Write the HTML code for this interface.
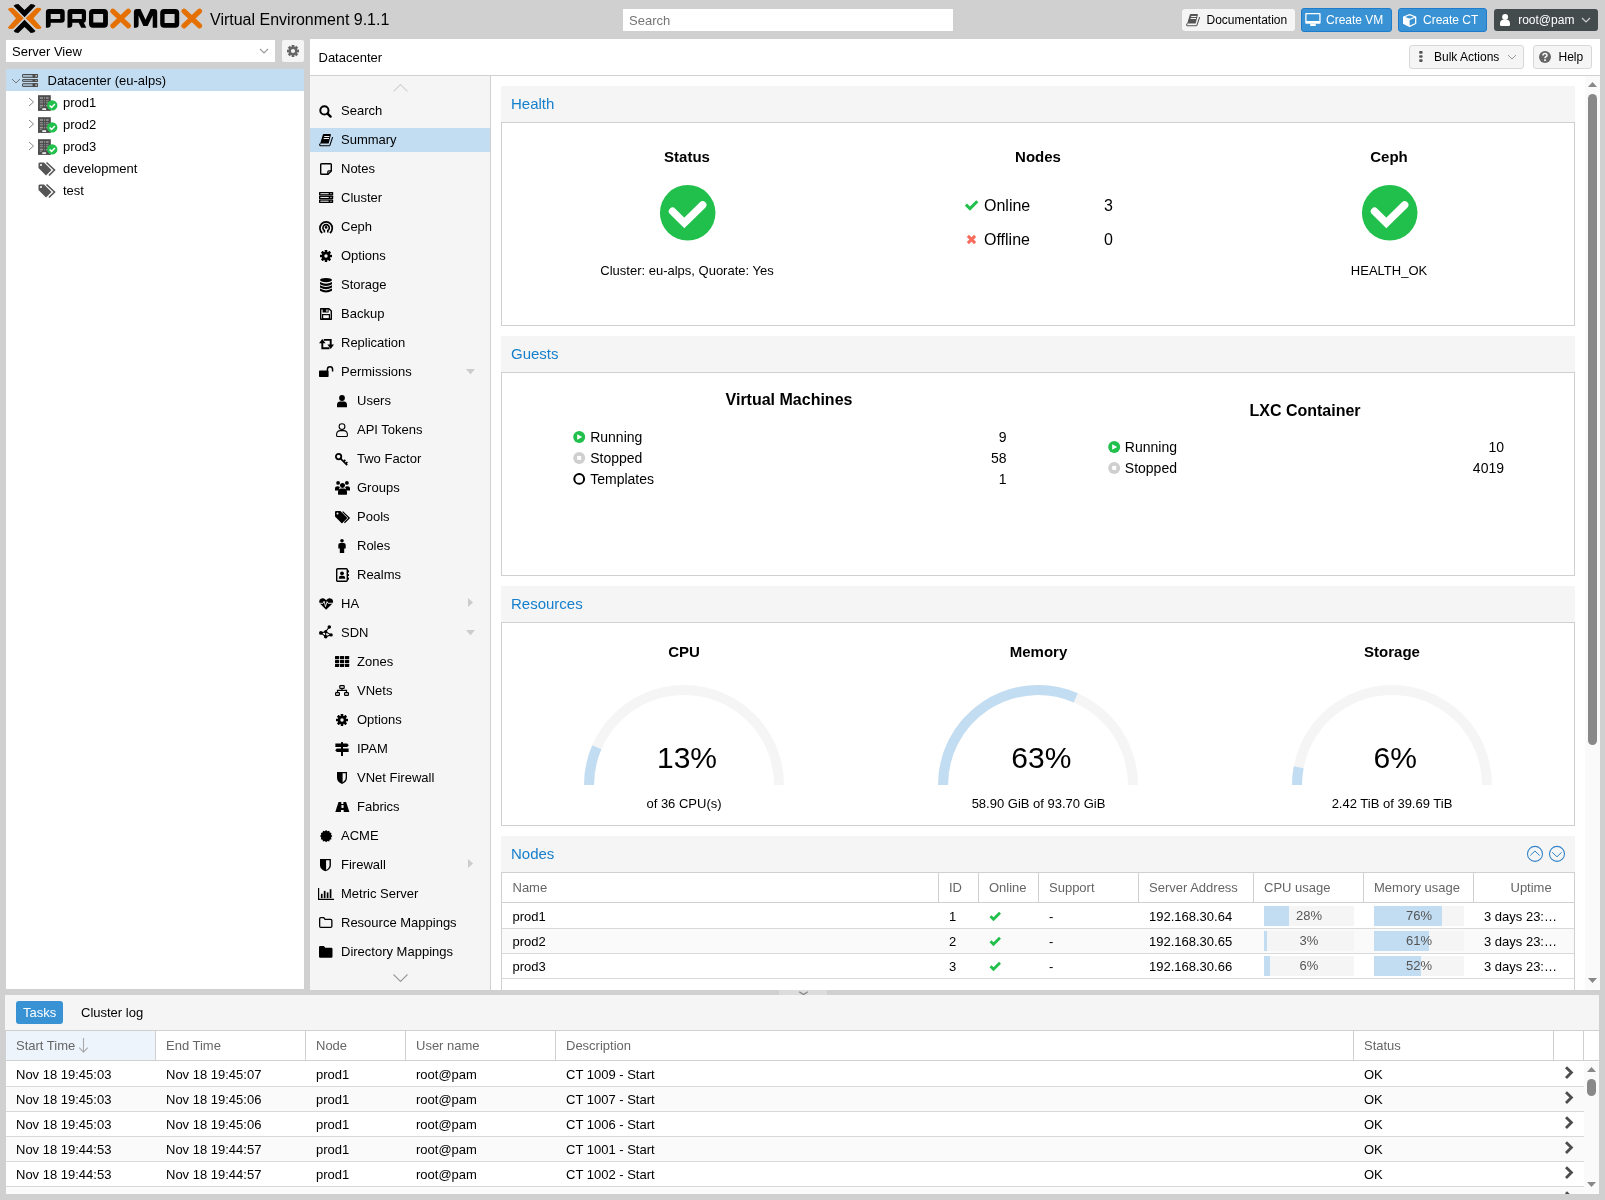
<!DOCTYPE html>
<html><head><meta charset="utf-8"><style>
html,body{margin:0;padding:0;}
body{width:1605px;height:1200px;overflow:hidden;background:#d0d0d0;position:relative;font-family:"Liberation Sans", sans-serif;}
.t{position:absolute;white-space:nowrap;}
#w{position:absolute;left:0;top:0;width:1605px;height:1200px;will-change:transform;}
.r{position:absolute;}
svg.r{overflow:visible;}
</style></head><body><div id="w">
<svg class="r" style="left:0px;top:0px" width="210" height="39" viewBox="0 0 210 39"><path d="M13.6,5.8 Q14.8,3.9 18.3,3.9 L24.55,9.9 L30.8,3.9 Q34.3,3.9 35.5,5.8 L24.55,17.2 Z" fill="#000"/><path d="M13.6,31.1 Q14.8,33 18.3,33 L24.55,27 L30.8,33 Q34.3,33 35.5,31.1 L24.55,19.7 Z" fill="#000"/><path d="M7.9,9.3 Q8.5,7.8 11,7.8 Q13,7.8 14,8.8 L23.7,18.3 L14,27.9 Q13,28.9 11,28.9 Q8.5,28.9 7.9,27.4 L16,18.3 Z" fill="#e57000"/><path d="M41.5,9.3 Q40.9,7.8 38.4,7.8 Q36.4,7.8 35.4,8.8 L25.7,18.3 L35.4,27.9 Q36.4,28.9 38.4,28.9 Q40.9,28.9 41.5,27.4 L33.4,18.3 Z" fill="#e57000"/><path fill-rule="evenodd" fill="#000" d="M45.9,27.8 V12 Q45.9,9 48.9,9 H61.5 Q64.7,9 64.7,12.2 V19.6 Q64.7,22.8 61.5,22.8 H50.7 V24.5 Q50.7,27.8 47.4,27.8 Z M50.7,14.1 V19.1 H60.2 V14.1 Z"/><path fill-rule="evenodd" fill="#000" d="M67.5,27.8 V12 Q67.5,9 70.5,9 H82.8 Q86,9 86,12.2 V19.6 Q86,22.3 83.8,22.8 L86.3,27.8 H81.3 L78.6,22.8 H72.3 V24.5 Q72.3,27.8 69,27.8 Z M72.3,14.1 V19.1 H81.8 V14.1 Z"/><path fill-rule="evenodd" fill="#000" d="M89,13 Q89,9 93,9 H103.9 Q107.9,9 107.9,13 V23.8 Q107.9,27.8 103.9,27.8 H93 Q89,27.8 89,23.8 Z M93.3,14.1 V22.5 H103.1 V14.1 Z"/><path d="M112.8,11.2 L128.4,25.8 M128.4,11.2 L112.8,25.8" stroke="#e57000" stroke-width="5.2" stroke-linecap="round"/><path fill="#000" d="M133.9,27.8 V12 Q133.9,9 136.9,9 H140.5 L145.5,19.8 L150.5,9 H154.2 Q157.2,9 157.2,12 V27.8 H152.7 V15.5 L147.6,25.9 H143.4 L138.6,15.5 V24.5 Q138.6,27.8 135.6,27.8 Z"/><path fill-rule="evenodd" fill="#000" d="M160.2,13 Q160.2,9 164.2,9 H175.2 Q179.2,9 179.2,13 V23.8 Q179.2,27.8 175.2,27.8 H164.2 Q160.2,27.8 160.2,23.8 Z M164.6,14 V23 H174.6 V14 Z"/><path d="M184,11.2 L199.6,25.8 M199.6,11.2 L184,25.8" stroke="#e57000" stroke-width="5.2" stroke-linecap="round"/></svg>
<div class="t" style="left:210.00px;top:12.46px;font-size:16px;line-height:16px;font-weight:normal;color:#000;">Virtual Environment 9.1.1</div>
<div class="r" style="left:623px;top:9px;width:330px;height:22px;background:#fff"></div>
<div class="t" style="left:629.00px;top:14.00px;font-size:13px;line-height:13px;font-weight:normal;color:#757575;">Search</div>
<div class="r" style="left:1182px;top:9px;width:113px;height:22px;background:#f5f5f5;border-radius:3px"></div>
<svg class="r" style="left:1186px;top:14px" width="14" height="12" viewBox="0 0 14 12"><path d="M4.6,0 H11.3 Q12.1,0 11.9,0.8 L9.7,9.2 Q9.6,9.6 9.1,9.6 H1.2 L3.9,0.6 Q4.1,0 4.6,0 Z" fill="#555"/><path d="M1.4,9.4 Q0.1,10.4 0.9,11.5 Q1.1,11.8 1.6,11.8 H10.6 M13.6,3.2 L10.8,11.6" fill="none" stroke="#555" stroke-width="1.1"/><path d="M5.2,2.5 H10.4 M4.6,4.5 H10" stroke="#f5f5f5" stroke-width="1"/></svg>
<div class="t" style="left:1206.50px;top:13.84px;font-size:12px;line-height:12px;font-weight:normal;color:#000;">Documentation</div>
<div class="r" style="left:1301px;top:8px;width:91px;height:24px;background:#3892d4;border:1px solid #1e7ccb;box-sizing:border-box;border-radius:3px"></div>
<svg class="r" style="left:1305px;top:12px" width="16" height="14" viewBox="0 0 16 14"><path fill-rule="evenodd" fill="#fff" d="M0.25,2 Q0.25,1 1.25,1 H14.6 Q15.6,1 15.6,2 V10.75 Q15.6,11.75 14.6,11.75 H1.25 Q0.25,11.75 0.25,10.75 Z M1.55,2.3 V8.9 H14.3 V2.3 Z"/><path d="M5.4,11.7 H10.6 L10.9,14 H5.1 Z" fill="#fff"/></svg>
<div class="t" style="left:1326.00px;top:13.84px;font-size:12px;line-height:12px;font-weight:normal;color:#fff;">Create VM</div>
<div class="r" style="left:1398px;top:8px;width:89px;height:24px;background:#3892d4;border:1px solid #1e7ccb;box-sizing:border-box;border-radius:3px"></div>
<svg class="r" style="left:1403px;top:14px" width="14" height="14" viewBox="0 0 14 14"><path d="M6.65,0.7 L12.65,3 V9.5 L6.65,12.3 L0.65,9.5 V3 Z" fill="none" stroke="#fff" stroke-width="1.3" stroke-linejoin="round"/><path d="M0.65,3 L6.65,5.4 V12.3 L0.65,9.5 Z" fill="#fff"/><path d="M0.65,3 L6.65,5.4 L12.65,3" fill="none" stroke="#fff" stroke-width="1.3"/></svg>
<div class="t" style="left:1423.00px;top:13.84px;font-size:12px;line-height:12px;font-weight:normal;color:#fff;">Create CT</div>
<div class="r" style="left:1494px;top:9px;width:104px;height:22px;background:#444b4c;border-radius:3px"></div>
<svg class="r" style="left:1500px;top:13px" width="11" height="13" viewBox="0 0 11 13"><circle cx="5.1" cy="3.9" r="3.0" fill="#fff"/><path d="M0,11.8 V10.6 Q0,6.8 3.6,6.8 H6.4 Q10,6.8 10,10.6 V11.8 Q10,13 8.8,13 H1.2 Q0,13 0,11.8 Z" fill="#fff"/></svg>
<div class="t" style="left:1518.20px;top:13.84px;font-size:12px;line-height:12px;font-weight:normal;color:#fff;">root@pam</div>
<svg class="r" style="left:1581px;top:17px" width="10" height="7" viewBox="0 0 10 7"><polyline points="1,1 5,5 9,1" fill="none" stroke="#ccc" stroke-width="1.2"/></svg>
<div class="r" style="left:6px;top:40px;width:269px;height:22px;background:#fff"></div>
<div class="t" style="left:12.00px;top:44.70px;font-size:13px;line-height:13px;font-weight:normal;color:#000;">Server View</div>
<svg class="r" style="left:259px;top:47.5px" width="10" height="7" viewBox="0 0 10 7"><polyline points="1,1 5,5 9,1" fill="none" stroke="#999" stroke-width="1.1"/></svg>
<div class="r" style="left:282px;top:40px;width:22px;height:22px;background:#f5f5f5;border-radius:2px"></div>
<svg class="r" style="left:287px;top:45px" width="12" height="12" viewBox="0 0 12 12"><rect x="4.6" y="0" width="2.8" height="3" fill="#666" transform="rotate(0 6.0 6.0)"/><rect x="4.6" y="0" width="2.8" height="3" fill="#666" transform="rotate(45 6.0 6.0)"/><rect x="4.6" y="0" width="2.8" height="3" fill="#666" transform="rotate(90 6.0 6.0)"/><rect x="4.6" y="0" width="2.8" height="3" fill="#666" transform="rotate(135 6.0 6.0)"/><rect x="4.6" y="0" width="2.8" height="3" fill="#666" transform="rotate(180 6.0 6.0)"/><rect x="4.6" y="0" width="2.8" height="3" fill="#666" transform="rotate(225 6.0 6.0)"/><rect x="4.6" y="0" width="2.8" height="3" fill="#666" transform="rotate(270 6.0 6.0)"/><rect x="4.6" y="0" width="2.8" height="3" fill="#666" transform="rotate(315 6.0 6.0)"/><circle cx="6.0" cy="6.0" r="4.4" fill="#666"/><circle cx="6.0" cy="6.0" r="2.0999999999999996" fill="#f3f3f3"/></svg>
<div class="r" style="left:6px;top:69px;width:298px;height:920px;background:#fff"></div>
<div class="r" style="left:6px;top:69px;width:298px;height:22px;background:#c2ddf2"></div>
<svg class="r" style="left:10.5px;top:78px" width="10" height="8" viewBox="0 0 10 8"><polyline points="1,1 5,5 9,1" fill="none" stroke="#777" stroke-width="1.0"/></svg>
<svg class="r" style="left:22px;top:74px" width="17" height="14" viewBox="0 0 17 14"><rect x="0.5" y="0.5" width="15" height="2.8" rx="0.4" fill="#a9bfd0" stroke="#4a4a4a" stroke-width="1.0"/><rect x="10.5" y="0" width="5.5" height="3.8" rx="0.8" fill="#4a4a4a"/><rect x="13.6" y="1" width="1" height="1.7999999999999998" fill="#fff"/><rect x="0.5" y="5.6" width="15" height="1.8000000000000007" rx="0.4" fill="#a9bfd0" stroke="#4a4a4a" stroke-width="1.0"/><rect x="10.5" y="5.1" width="5.5" height="2.8000000000000007" rx="0.8" fill="#4a4a4a"/><rect x="13.6" y="6.1" width="1" height="0.8000000000000007" fill="#fff"/><rect x="0.5" y="9.7" width="15" height="2.700000000000001" rx="0.4" fill="#a9bfd0" stroke="#4a4a4a" stroke-width="1.0"/><rect x="10.5" y="9.2" width="5.5" height="3.700000000000001" rx="0.8" fill="#4a4a4a"/><rect x="13.6" y="10.2" width="1" height="1.700000000000001" fill="#fff"/></svg>
<div class="t" style="left:47.50px;top:74.00px;font-size:13px;line-height:13px;font-weight:normal;color:#000;">Datacenter (eu-alps)</div>
<svg class="r" style="left:28px;top:97px" width="7" height="10" viewBox="0 0 7 10"><polyline points="1,1 5.5,5 1,9" fill="none" stroke="#888" stroke-width="1.0"/></svg>
<svg class="r" style="left:37px;top:95px" width="20" height="17" viewBox="0 0 20 17"><rect x="1" y="0.2" width="12.8" height="15.7" fill="#4d4d4d"/><rect x="2.8" y="2.2" width="3.2" height="1.6" fill="#9a9a9a"/><rect x="7.1" y="2.2" width="1" height="1.6" fill="#9a9a9a"/><rect x="9.1" y="2.2" width="2.5" height="1.6" fill="#9a9a9a"/><rect x="2.8" y="5.3" width="3.2" height="1.0" fill="#9a9a9a"/><rect x="7.1" y="5.3" width="1" height="1.0" fill="#9a9a9a"/><rect x="9.1" y="5.3" width="2.5" height="1.0" fill="#9a9a9a"/><rect x="2.8" y="7.3" width="3.2" height="1.0" fill="#9a9a9a"/><rect x="7.1" y="7.3" width="1" height="1.0" fill="#9a9a9a"/><rect x="9.1" y="7.3" width="2.5" height="1.0" fill="#9a9a9a"/><rect x="2.8" y="9.8" width="3.2" height="1.6" fill="#9a9a9a"/><rect x="7.1" y="9.8" width="1" height="1.6" fill="#9a9a9a"/><rect x="9.1" y="9.8" width="2.5" height="1.6" fill="#9a9a9a"/><rect x="2.8" y="12.2" width="1.8" height="0.8" fill="#9a9a9a"/><rect x="5.3" y="13.3" width="3.8" height="1.6" fill="#fff"/><circle cx="15.2" cy="10.4" r="5.2" fill="#21bf4b"/><polyline points="12.6,10.5 14.6,12.4 17.9,9" fill="none" stroke="#fff" stroke-width="1.5"/></svg>
<div class="t" style="left:63.00px;top:96.00px;font-size:13px;line-height:13px;font-weight:normal;color:#000;">prod1</div>
<svg class="r" style="left:28px;top:119px" width="7" height="10" viewBox="0 0 7 10"><polyline points="1,1 5.5,5 1,9" fill="none" stroke="#888" stroke-width="1.0"/></svg>
<svg class="r" style="left:37px;top:117px" width="20" height="17" viewBox="0 0 20 17"><rect x="1" y="0.2" width="12.8" height="15.7" fill="#4d4d4d"/><rect x="2.8" y="2.2" width="3.2" height="1.6" fill="#9a9a9a"/><rect x="7.1" y="2.2" width="1" height="1.6" fill="#9a9a9a"/><rect x="9.1" y="2.2" width="2.5" height="1.6" fill="#9a9a9a"/><rect x="2.8" y="5.3" width="3.2" height="1.0" fill="#9a9a9a"/><rect x="7.1" y="5.3" width="1" height="1.0" fill="#9a9a9a"/><rect x="9.1" y="5.3" width="2.5" height="1.0" fill="#9a9a9a"/><rect x="2.8" y="7.3" width="3.2" height="1.0" fill="#9a9a9a"/><rect x="7.1" y="7.3" width="1" height="1.0" fill="#9a9a9a"/><rect x="9.1" y="7.3" width="2.5" height="1.0" fill="#9a9a9a"/><rect x="2.8" y="9.8" width="3.2" height="1.6" fill="#9a9a9a"/><rect x="7.1" y="9.8" width="1" height="1.6" fill="#9a9a9a"/><rect x="9.1" y="9.8" width="2.5" height="1.6" fill="#9a9a9a"/><rect x="2.8" y="12.2" width="1.8" height="0.8" fill="#9a9a9a"/><rect x="5.3" y="13.3" width="3.8" height="1.6" fill="#fff"/><circle cx="15.2" cy="10.4" r="5.2" fill="#21bf4b"/><polyline points="12.6,10.5 14.6,12.4 17.9,9" fill="none" stroke="#fff" stroke-width="1.5"/></svg>
<div class="t" style="left:63.00px;top:118.00px;font-size:13px;line-height:13px;font-weight:normal;color:#000;">prod2</div>
<svg class="r" style="left:28px;top:141px" width="7" height="10" viewBox="0 0 7 10"><polyline points="1,1 5.5,5 1,9" fill="none" stroke="#888" stroke-width="1.0"/></svg>
<svg class="r" style="left:37px;top:139px" width="20" height="17" viewBox="0 0 20 17"><rect x="1" y="0.2" width="12.8" height="15.7" fill="#4d4d4d"/><rect x="2.8" y="2.2" width="3.2" height="1.6" fill="#9a9a9a"/><rect x="7.1" y="2.2" width="1" height="1.6" fill="#9a9a9a"/><rect x="9.1" y="2.2" width="2.5" height="1.6" fill="#9a9a9a"/><rect x="2.8" y="5.3" width="3.2" height="1.0" fill="#9a9a9a"/><rect x="7.1" y="5.3" width="1" height="1.0" fill="#9a9a9a"/><rect x="9.1" y="5.3" width="2.5" height="1.0" fill="#9a9a9a"/><rect x="2.8" y="7.3" width="3.2" height="1.0" fill="#9a9a9a"/><rect x="7.1" y="7.3" width="1" height="1.0" fill="#9a9a9a"/><rect x="9.1" y="7.3" width="2.5" height="1.0" fill="#9a9a9a"/><rect x="2.8" y="9.8" width="3.2" height="1.6" fill="#9a9a9a"/><rect x="7.1" y="9.8" width="1" height="1.6" fill="#9a9a9a"/><rect x="9.1" y="9.8" width="2.5" height="1.6" fill="#9a9a9a"/><rect x="2.8" y="12.2" width="1.8" height="0.8" fill="#9a9a9a"/><rect x="5.3" y="13.3" width="3.8" height="1.6" fill="#fff"/><circle cx="15.2" cy="10.4" r="5.2" fill="#21bf4b"/><polyline points="12.6,10.5 14.6,12.4 17.9,9" fill="none" stroke="#fff" stroke-width="1.5"/></svg>
<div class="t" style="left:63.00px;top:140.00px;font-size:13px;line-height:13px;font-weight:normal;color:#000;">prod3</div>
<svg class="r" style="left:38px;top:162px" width="18" height="15" viewBox="0 0 18 15"><path d="M0.5,1.5 V6 L8,13.5 L13.5,8 L6,0.5 H1.5 Z" fill="#555"/><circle cx="3" cy="3" r="1" fill="#fff"/><path d="M8.5,0.5 L16.5,8 L11,13.5" fill="none" stroke="#555" stroke-width="1.6"/></svg>
<div class="t" style="left:63.00px;top:162.00px;font-size:13px;line-height:13px;font-weight:normal;color:#000;">development</div>
<svg class="r" style="left:38px;top:184px" width="18" height="15" viewBox="0 0 18 15"><path d="M0.5,1.5 V6 L8,13.5 L13.5,8 L6,0.5 H1.5 Z" fill="#555"/><circle cx="3" cy="3" r="1" fill="#fff"/><path d="M8.5,0.5 L16.5,8 L11,13.5" fill="none" stroke="#555" stroke-width="1.6"/></svg>
<div class="t" style="left:63.00px;top:184.00px;font-size:13px;line-height:13px;font-weight:normal;color:#000;">test</div>
<div class="r" style="left:310px;top:39px;width:1290px;height:951px;background:#fff"></div>
<div class="r" style="left:310px;top:75px;width:1290px;height:1px;background:#d0d0d0"></div>
<div class="t" style="left:318.50px;top:51.00px;font-size:13px;line-height:13px;font-weight:normal;color:#000;">Datacenter</div>
<div class="r" style="left:1409px;top:45px;width:115px;height:24px;background:#f5f5f5;border:1px solid #d8d8d8;box-sizing:border-box;border-radius:3px"></div>
<svg class="r" style="left:1419px;top:51px" width="4" height="11" viewBox="0 0 4 11"><rect x="0.2" y="0" width="3.4" height="2.8" rx="0.8" fill="#555"/><rect x="0.2" y="4.2" width="3.4" height="2.6" rx="0.8" fill="#555"/><rect x="0.2" y="8.2" width="3.4" height="2.7" rx="0.8" fill="#555"/></svg>
<div class="t" style="left:1434.00px;top:50.84px;font-size:12px;line-height:12px;font-weight:normal;color:#000;">Bulk Actions</div>
<svg class="r" style="left:1507px;top:54px" width="10" height="7" viewBox="0 0 10 7"><polyline points="1,1 5,5 9,1" fill="none" stroke="#999" stroke-width="1.0"/></svg>
<div class="r" style="left:1533px;top:45px;width:59px;height:24px;background:#f5f5f5;border:1px solid #d8d8d8;box-sizing:border-box;border-radius:3px"></div>
<svg class="r" style="left:1539px;top:51px" width="12" height="12" viewBox="0 0 12 12"><circle cx="6" cy="6" r="6" fill="#666"/><path d="M4,4.5 Q4,2.5 6,2.5 Q8,2.5 8,4.3 Q8,5.5 6.6,6 Q6,6.3 6,7.3" fill="none" stroke="#f5f5f5" stroke-width="1.6"/><rect x="5.1" y="8.3" width="1.8" height="1.8" fill="#f5f5f5"/></svg>
<div class="t" style="left:1558.50px;top:50.84px;font-size:12px;line-height:12px;font-weight:normal;color:#000;">Help</div>
<div class="r" style="left:310px;top:76px;width:180px;height:914px;background:#f5f5f5"></div>
<div class="r" style="left:490px;top:76px;width:1px;height:914px;background:#d0d0d0"></div>
<svg class="r" style="left:393px;top:83px" width="15" height="10" viewBox="0 0 15 10"><polyline points="0.5,8.5 7.5,1.5 14.5,8.5" fill="none" stroke="#d4d4d4" stroke-width="1.1"/></svg>
<svg class="r" style="left:393px;top:973px" width="15" height="10" viewBox="0 0 15 10"><polyline points="0.5,1.5 7.5,8.5 14.5,1.5" fill="none" stroke="#999" stroke-width="1.1"/></svg>
<div class="r" style="left:310px;top:128px;width:180px;height:24px;background:#c2ddf2"></div>
<svg class="r" style="left:319.3px;top:105px" width="13" height="13" viewBox="0 0 13 13"><circle cx="5.4" cy="5.4" r="4.1" fill="none" stroke="#000" stroke-width="2"/><path d="M8.6,8.6 L11.6,11.6" stroke="#000" stroke-width="2.4" stroke-linecap="round"/></svg>
<div class="t" style="left:341.00px;top:104.00px;font-size:13px;line-height:13px;font-weight:normal;color:#000;">Search</div>
<svg class="r" style="left:319.3px;top:134px" width="14" height="12" viewBox="0 0 14 12"><path d="M4.6,0 H11.3 Q12.1,0 11.9,0.8 L9.7,9.2 Q9.6,9.6 9.1,9.6 H1.2 L3.9,0.6 Q4.1,0 4.6,0 Z" fill="#000"/><path d="M1.4,9.4 Q0.1,10.4 0.9,11.5 Q1.1,11.8 1.6,11.8 H10.6 M13.6,3.2 L10.8,11.6" fill="none" stroke="#000" stroke-width="1.1"/><path d="M5.2,2.5 H10.4 M4.6,4.5 H10" stroke="#f5f5f5" stroke-width="1"/></svg>
<div class="t" style="left:341.00px;top:133.00px;font-size:13px;line-height:13px;font-weight:normal;color:#000;">Summary</div>
<svg class="r" style="left:320px;top:163px" width="12" height="12" viewBox="0 0 12 12"><path d="M1.5,0.7 H10.5 Q11.3,0.7 11.3,1.5 V8 L8,11.3 H1.5 Q0.7,11.3 0.7,10.5 V1.5 Q0.7,0.7 1.5,0.7 Z" fill="none" stroke="#000" stroke-width="1.4"/><path d="M11.3,7.8 H8.8 Q7.8,7.8 7.8,8.8 V11.3" fill="none" stroke="#000" stroke-width="1.2"/></svg>
<div class="t" style="left:341.00px;top:162.00px;font-size:13px;line-height:13px;font-weight:normal;color:#000;">Notes</div>
<svg class="r" style="left:319px;top:192px" width="14.2" height="11" viewBox="0 0 14.2 11"><rect x="0" y="0" width="14.2" height="3.4" rx="0.6" fill="#000"/><rect x="1.4" y="1.2" width="8.3" height="1" fill="#f5f5f5"/><circle cx="12" cy="1.7" r="0.6" fill="#f5f5f5"/><rect x="0" y="3.75" width="14.2" height="3.4" rx="0.6" fill="#000"/><rect x="1.4" y="4.95" width="8.3" height="1" fill="#f5f5f5"/><circle cx="12" cy="5.45" r="0.6" fill="#f5f5f5"/><rect x="0" y="7.5" width="14.2" height="3.4" rx="0.6" fill="#000"/><rect x="1.4" y="8.7" width="8.3" height="1" fill="#f5f5f5"/><circle cx="12" cy="9.2" r="0.6" fill="#f5f5f5"/></svg>
<div class="t" style="left:341.00px;top:191.00px;font-size:13px;line-height:13px;font-weight:normal;color:#000;">Cluster</div>
<svg class="r" style="left:319px;top:220px" width="14.2" height="14" viewBox="0 0 14.2 14"><path d="M3.3,13 A6.2,6.2 0 1 1 10.9,13" fill="none" stroke="#000" stroke-width="1.7"/><path d="M5.4,12.6 V10.5 A3.2,3.2 0 1 1 8.8,10.5 V12.6" fill="none" stroke="#000" stroke-width="1.6"/><circle cx="7.1" cy="7.4" r="1.3" fill="#000"/></svg>
<div class="t" style="left:341.00px;top:220.00px;font-size:13px;line-height:13px;font-weight:normal;color:#000;">Ceph</div>
<svg class="r" style="left:320px;top:250px" width="12" height="12" viewBox="0 0 12 12"><rect x="4.70" y="0.00" width="2.6" height="2.70" rx="0.4" fill="#000" transform="rotate(0.0 6 6)"/><rect x="4.70" y="0.00" width="2.6" height="2.70" rx="0.4" fill="#000" transform="rotate(45.0 6 6)"/><rect x="4.70" y="0.00" width="2.6" height="2.70" rx="0.4" fill="#000" transform="rotate(90.0 6 6)"/><rect x="4.70" y="0.00" width="2.6" height="2.70" rx="0.4" fill="#000" transform="rotate(135.0 6 6)"/><rect x="4.70" y="0.00" width="2.6" height="2.70" rx="0.4" fill="#000" transform="rotate(180.0 6 6)"/><rect x="4.70" y="0.00" width="2.6" height="2.70" rx="0.4" fill="#000" transform="rotate(225.0 6 6)"/><rect x="4.70" y="0.00" width="2.6" height="2.70" rx="0.4" fill="#000" transform="rotate(270.0 6 6)"/><rect x="4.70" y="0.00" width="2.6" height="2.70" rx="0.4" fill="#000" transform="rotate(315.0 6 6)"/><circle cx="6" cy="6" r="4.3" fill="#000"/><circle cx="6" cy="6" r="1.7" fill="#f5f5f5"/></svg>
<div class="t" style="left:341.00px;top:249.00px;font-size:13px;line-height:13px;font-weight:normal;color:#000;">Options</div>
<svg class="r" style="left:320px;top:278px" width="12" height="14" viewBox="0 0 12 14"><ellipse cx="6" cy="2.1" rx="6" ry="2.1" fill="#000"/><path d="M0,4.0 Q6,7.6 12,4.0 V6.2 Q6,9.8 0,6.2 Z" fill="#000"/><path d="M0,7.3 Q6,10.9 12,7.3 V9.5 Q6,13.1 0,9.5 Z" fill="#000"/><path d="M0,10.6 Q6,14.2 12,10.6 V12.8 Q6,16.4 0,12.8 Z" fill="#000"/></svg>
<div class="t" style="left:341.00px;top:278.00px;font-size:13px;line-height:13px;font-weight:normal;color:#000;">Storage</div>
<svg class="r" style="left:320px;top:308px" width="12" height="12" viewBox="0 0 12 12"><path d="M0.7,0.7 H8.9 L11.3,3.1 V11.3 H0.7 Z" fill="none" stroke="#000" stroke-width="1.4" stroke-linejoin="round"/><rect x="2.6" y="0.7" width="6" height="3.8" fill="#000"/><rect x="6.3" y="1.5" width="1.3" height="2.2" fill="#f5f5f5"/><rect x="2.6" y="6.6" width="6.8" height="4.2" fill="none" stroke="#000" stroke-width="1.2"/></svg>
<div class="t" style="left:341.00px;top:307.00px;font-size:13px;line-height:13px;font-weight:normal;color:#000;">Backup</div>
<svg class="r" style="left:318.5px;top:338.7px" width="15" height="10" viewBox="0 0 15 10"><polygon points="0,4.3 3.3,0 6.6,4.3" fill="#000"/><path d="M3.3,3.5 V9.2 H10.5" fill="none" stroke="#000" stroke-width="1.9"/><path d="M4.8,0.9 H11.7 V6.5" fill="none" stroke="#000" stroke-width="1.9"/><polygon points="8.4,5.6 11.7,9.9 15,5.6" fill="#000"/></svg>
<div class="t" style="left:341.00px;top:336.00px;font-size:13px;line-height:13px;font-weight:normal;color:#000;">Replication</div>
<svg class="r" style="left:319px;top:366px" width="14" height="11" viewBox="0 0 14 11"><rect x="0" y="4.6" width="9.6" height="6.4" rx="0.8" fill="#000"/><path d="M8.4,5 V3.4 A2.6,2.6 0 0 1 13.6,3.4 V5.4" fill="none" stroke="#000" stroke-width="1.5"/></svg>
<div class="t" style="left:341.00px;top:365.00px;font-size:13px;line-height:13px;font-weight:normal;color:#000;">Permissions</div>
<svg class="r" style="left:466px;top:369px" width="9" height="5.2" viewBox="0 0 9 5.2"><polygon points="0,0 9,0 4.5,5.2" fill="#ccc"/></svg>
<svg class="r" style="left:337px;top:395px" width="10" height="12.2" viewBox="0 0 10 12.2"><circle cx="5" cy="3" r="2.9" fill="#000"/><path d="M0,12.2 V10 Q0,6.4 3,6.4 H7 Q10,6.4 10,10 V12.2 Z" fill="#000"/></svg>
<div class="t" style="left:357.00px;top:394.00px;font-size:13px;line-height:13px;font-weight:normal;color:#000;">Users</div>
<svg class="r" style="left:336px;top:423px" width="12" height="14" viewBox="0 0 12 14"><circle cx="6" cy="3.6" r="2.9" fill="none" stroke="#000" stroke-width="1.1"/><path d="M1.3,13.5 Q0.6,13.5 0.6,12.6 V11.6 Q0.6,7.6 4.5,7.6 H7.5 Q11.4,7.6 11.4,11.6 V12.6 Q11.4,13.5 10.7,13.5 Z" fill="none" stroke="#000" stroke-width="1.1"/></svg>
<div class="t" style="left:357.00px;top:423.00px;font-size:13px;line-height:13px;font-weight:normal;color:#000;">API Tokens</div>
<svg class="r" style="left:335px;top:453px" width="13" height="12.5" viewBox="0 0 13 12.5"><circle cx="3.6" cy="3.6" r="2.7" fill="none" stroke="#000" stroke-width="1.8"/><path d="M5.6,5.6 L12.2,12.2 M8.6,8.6 L10.3,6.9 M10.7,10.7 L12.4,9" fill="none" stroke="#000" stroke-width="1.7"/></svg>
<div class="t" style="left:357.00px;top:452.00px;font-size:13px;line-height:13px;font-weight:normal;color:#000;">Two Factor</div>
<svg class="r" style="left:334.6px;top:481px" width="15" height="13.7" viewBox="0 0 15 13.7"><circle cx="3.1" cy="1.9" r="1.9" fill="#000"/><circle cx="11.9" cy="1.9" r="1.9" fill="#000"/><circle cx="7.5" cy="4.4" r="2.5" fill="#000"/><path d="M0,9.6 V7.6 Q0,5.2 2.8,5.2 Q4.2,5.2 4.9,6.2 Q3.8,7.6 3.8,9.6 Z" fill="#000"/><path d="M15,9.6 V7.6 Q15,5.2 12.2,5.2 Q10.8,5.2 10.1,6.2 Q11.2,7.6 11.2,9.6 Z" fill="#000"/><path d="M3.5,13.7 Q3,13.7 3,13 V11.2 Q3,7.6 6.2,7.6 H8.8 Q12,7.6 12,11.2 V13 Q12,13.7 11.5,13.7 Z" fill="#000"/></svg>
<div class="t" style="left:357.00px;top:481.00px;font-size:13px;line-height:13px;font-weight:normal;color:#000;">Groups</div>
<svg class="r" style="left:334.6px;top:511px" width="15" height="12.4" viewBox="0 0 15 12.4"><path d="M0,1.1 Q0,0 1.1,0 H5.4 L11.9,6.5 Q12.4,7 11.9,7.5 L7.4,12 Q6.9,12.5 6.4,12 L0,5.6 Z" fill="#000"/><circle cx="2.5" cy="2.5" r="1" fill="#f5f5f5"/><path d="M7.6,0.6 L14.2,7 L9.4,11.8" fill="none" stroke="#000" stroke-width="1.3"/></svg>
<div class="t" style="left:357.00px;top:510.00px;font-size:13px;line-height:13px;font-weight:normal;color:#000;">Pools</div>
<svg class="r" style="left:338px;top:539px" width="8" height="14" viewBox="0 0 8 14"><circle cx="4" cy="1.8" r="1.8" fill="#000"/><path d="M0.3,6.1 Q0.3,4.1 2.3,4.1 H5.7 Q7.7,4.1 7.7,6.1 V9.6 H6.2 V14 H1.8 V9.6 H0.3 Z" fill="#000"/></svg>
<div class="t" style="left:357.00px;top:539.00px;font-size:13px;line-height:13px;font-weight:normal;color:#000;">Roles</div>
<svg class="r" style="left:335.6px;top:568px" width="13" height="14" viewBox="0 0 13 14"><rect x="0.7" y="0.7" width="10.6" height="12.6" rx="1" fill="none" stroke="#000" stroke-width="1.4"/><rect x="11" y="2.3" width="2" height="2.2" rx="0.6" fill="#000"/><rect x="11" y="5.9" width="2" height="2.2" rx="0.6" fill="#000"/><rect x="11" y="9.5" width="2" height="2.2" rx="0.6" fill="#000"/><circle cx="6" cy="5.3" r="1.9" fill="#000"/><path d="M2.8,10.8 V10 Q2.8,7.7 5,7.7 H7 Q9.2,7.7 9.2,10 V10.8 Z" fill="#000"/></svg>
<div class="t" style="left:357.00px;top:568.00px;font-size:13px;line-height:13px;font-weight:normal;color:#000;">Realms</div>
<svg class="r" style="left:319px;top:598px" width="14.3" height="11.7" viewBox="0 0 14.3 11.7"><path d="M7.15,11.7 L1.3,6 Q-0.6,3.8 0.6,1.8 Q1.9,-0.2 4.2,0.2 Q6,0.6 7.15,2.2 Q8.3,0.6 10.1,0.2 Q12.4,-0.2 13.7,1.8 Q14.9,3.8 13,6 Z" fill="#000"/><polyline points="0.5,5.3 4,5.3 5.1,3.2 6.5,8.6 8,3.6 9,5.3 13.8,5.3" fill="none" stroke="#f5f5f5" stroke-width="0.9"/></svg>
<div class="t" style="left:341.00px;top:597.00px;font-size:13px;line-height:13px;font-weight:normal;color:#000;">HA</div>
<svg class="r" style="left:468px;top:598px" width="5.1" height="9" viewBox="0 0 5.1 9"><polygon points="0,0 5.1,4.5 0,9" fill="#ccc"/></svg>
<svg class="r" style="left:319px;top:625px" width="14" height="13.6" viewBox="0 0 14 13.6"><path d="M6.7,6.7 L10.3,2 M6.7,6.7 L1.9,7.9 M6.7,6.7 L6.7,11.7 M6.7,6.7 L12.1,9.9 M1.9,7.9 L6.7,11.7 L12.1,9.9" fill="none" stroke="#000" stroke-width="1.1"/><circle cx="10.3" cy="2" r="1.8" fill="#000"/><circle cx="1.9" cy="7.9" r="1.9" fill="#000"/><circle cx="6.7" cy="6.7" r="1.6" fill="#000"/><circle cx="6.7" cy="11.8" r="1.8" fill="#000"/><circle cx="12.1" cy="9.9" r="1.7" fill="#000"/></svg>
<div class="t" style="left:341.00px;top:626.00px;font-size:13px;line-height:13px;font-weight:normal;color:#000;">SDN</div>
<svg class="r" style="left:466px;top:630px" width="9" height="5.2" viewBox="0 0 9 5.2"><polygon points="0,0 9,0 4.5,5.2" fill="#ccc"/></svg>
<svg class="r" style="left:334.9px;top:656px" width="14.2" height="11" viewBox="0 0 14.2 11"><rect x="0" y="0.0" width="4.2" height="3.2" rx="0.5" fill="#000"/><rect x="0" y="3.9" width="4.2" height="3.2" rx="0.5" fill="#000"/><rect x="0" y="7.8" width="4.2" height="3.2" rx="0.5" fill="#000"/><rect x="5" y="0.0" width="4.2" height="3.2" rx="0.5" fill="#000"/><rect x="5" y="3.9" width="4.2" height="3.2" rx="0.5" fill="#000"/><rect x="5" y="7.8" width="4.2" height="3.2" rx="0.5" fill="#000"/><rect x="10" y="0.0" width="4.2" height="3.2" rx="0.5" fill="#000"/><rect x="10" y="3.9" width="4.2" height="3.2" rx="0.5" fill="#000"/><rect x="10" y="7.8" width="4.2" height="3.2" rx="0.5" fill="#000"/></svg>
<div class="t" style="left:357.00px;top:655.00px;font-size:13px;line-height:13px;font-weight:normal;color:#000;">Zones</div>
<svg class="r" style="left:334.9px;top:684.5px" width="14" height="11" viewBox="0 0 14 11"><rect x="4.8" y="0.6" width="4.4" height="2.8" rx="0.6" fill="none" stroke="#000" stroke-width="1.2"/><path d="M7,3.4 V5.4 M2.5,7.6 V5.4 H11.5 V7.6" fill="none" stroke="#000" stroke-width="1.2"/><rect x="0.6" y="7.6" width="3.8" height="2.8" rx="0.6" fill="none" stroke="#000" stroke-width="1.2"/><rect x="9.6" y="7.6" width="3.8" height="2.8" rx="0.6" fill="none" stroke="#000" stroke-width="1.2"/></svg>
<div class="t" style="left:357.00px;top:684.00px;font-size:13px;line-height:13px;font-weight:normal;color:#000;">VNets</div>
<svg class="r" style="left:336px;top:714px" width="12" height="12" viewBox="0 0 12 12"><rect x="4.70" y="0.00" width="2.6" height="2.70" rx="0.4" fill="#000" transform="rotate(0.0 6 6)"/><rect x="4.70" y="0.00" width="2.6" height="2.70" rx="0.4" fill="#000" transform="rotate(45.0 6 6)"/><rect x="4.70" y="0.00" width="2.6" height="2.70" rx="0.4" fill="#000" transform="rotate(90.0 6 6)"/><rect x="4.70" y="0.00" width="2.6" height="2.70" rx="0.4" fill="#000" transform="rotate(135.0 6 6)"/><rect x="4.70" y="0.00" width="2.6" height="2.70" rx="0.4" fill="#000" transform="rotate(180.0 6 6)"/><rect x="4.70" y="0.00" width="2.6" height="2.70" rx="0.4" fill="#000" transform="rotate(225.0 6 6)"/><rect x="4.70" y="0.00" width="2.6" height="2.70" rx="0.4" fill="#000" transform="rotate(270.0 6 6)"/><rect x="4.70" y="0.00" width="2.6" height="2.70" rx="0.4" fill="#000" transform="rotate(315.0 6 6)"/><circle cx="6" cy="6" r="4.3" fill="#000"/><circle cx="6" cy="6" r="1.7" fill="#f5f5f5"/></svg>
<div class="t" style="left:357.00px;top:713.00px;font-size:13px;line-height:13px;font-weight:normal;color:#000;">Options</div>
<svg class="r" style="left:335.1px;top:742px" width="14" height="14" viewBox="0 0 14 14"><rect x="6" y="0" width="2" height="14" rx="0.5" fill="#000"/><path d="M0.4,1.6 H12.2 L13.8,3.35 L12.2,5.1 H0.4 Z" fill="#000"/><path d="M13.6,6.6 H1.8 L0.2,8.35 L1.8,10.1 H13.6 Z" fill="#000"/></svg>
<div class="t" style="left:357.00px;top:742.00px;font-size:13px;line-height:13px;font-weight:normal;color:#000;">IPAM</div>
<svg class="r" style="left:337px;top:772px" width="10" height="12" viewBox="0 0 10 12"><path d="M0,0 H10 V6 Q10,9.8 5,12 Q0,9.8 0,6 Z" fill="#000"/><path d="M5.6,1.2 H8.7 V6 Q8.7,8.6 5.6,10.6 Z" fill="#f5f5f5"/></svg>
<div class="t" style="left:357.00px;top:771.00px;font-size:13px;line-height:13px;font-weight:normal;color:#000;">VNet Firewall</div>
<svg class="r" style="left:334.6px;top:802px" width="14.5" height="10" viewBox="0 0 14.5 10"><path d="M0.3,9.9 L3.5,0.1 H11.1 L14.4,9.9 Z" fill="#000"/><rect x="6.3" y="0" width="2.1" height="2" fill="#f5f5f5"/><rect x="6.4" y="3.1" width="2.2" height="2.8" fill="#f5f5f5"/><rect x="5.9" y="8" width="2.8" height="2" fill="#f5f5f5"/></svg>
<div class="t" style="left:357.00px;top:800.00px;font-size:13px;line-height:13px;font-weight:normal;color:#000;">Fabrics</div>
<svg class="r" style="left:319.8px;top:829.6px" width="12.3" height="12.2" viewBox="0 0 12.3 12.2"><polygon points="12.30,6.10 11.08,7.42 11.48,9.17 9.76,9.71 9.23,11.43 7.47,11.03 6.15,12.25 4.83,11.03 3.08,11.43 2.54,9.71 0.82,9.17 1.22,7.42 0.00,6.10 1.22,4.78 0.82,3.03 2.54,2.49 3.07,0.77 4.83,1.17 6.15,-0.05 7.47,1.17 9.23,0.77 9.76,2.49 11.48,3.02 11.08,4.78" fill="#000"/></svg>
<div class="t" style="left:341.00px;top:829.00px;font-size:13px;line-height:13px;font-weight:normal;color:#000;">ACME</div>
<svg class="r" style="left:320.4px;top:858.7px" width="10.9" height="12.3" viewBox="0 0 10.9 12.3"><path d="M0,0 H10.9 V6.2 Q10.9,10.2 5.45,12.3 Q0,10.2 0,6.2 Z" fill="#000"/><path d="M6.1,1.3 H9.5 V6.2 Q9.5,9 6.1,10.9 Z" fill="#f5f5f5"/></svg>
<div class="t" style="left:341.00px;top:858.00px;font-size:13px;line-height:13px;font-weight:normal;color:#000;">Firewall</div>
<svg class="r" style="left:468px;top:859px" width="5.1" height="9" viewBox="0 0 5.1 9"><polygon points="0,0 5.1,4.5 0,9" fill="#ccc"/></svg>
<svg class="r" style="left:318px;top:888px" width="16" height="12" viewBox="0 0 16 12"><path d="M0.6,0 V11.4 H16" fill="none" stroke="#000" stroke-width="1.2"/><rect x="2.9" y="5.8" width="1.7" height="4.3" fill="#000"/><rect x="5.8" y="2.9" width="1.7" height="7.2" fill="#000"/><rect x="8.75" y="4.4" width="1.7" height="5.7" fill="#000"/><rect x="11.7" y="1.2" width="1.7" height="8.9" fill="#000"/></svg>
<div class="t" style="left:341.00px;top:887.00px;font-size:13px;line-height:13px;font-weight:normal;color:#000;">Metric Server</div>
<svg class="r" style="left:319.2px;top:917px" width="13.5" height="11" viewBox="0 0 13.5 11"><path d="M0.65,1.8 Q0.65,0.65 1.8,0.65 H4.8 L6,2.3 H11.7 Q12.85,2.3 12.85,3.4 V9.2 Q12.85,10.35 11.7,10.35 H1.8 Q0.65,10.35 0.65,9.2 Z" fill="none" stroke="#000" stroke-width="1.3"/></svg>
<div class="t" style="left:341.00px;top:916.00px;font-size:13px;line-height:13px;font-weight:normal;color:#000;">Resource Mappings</div>
<svg class="r" style="left:319.2px;top:945.6px" width="13.5" height="11.7" viewBox="0 0 13.5 11.7"><path d="M0,1.2 Q0,0 1.2,0 H4.9 L6.3,1.8 H12.3 Q13.5,1.8 13.5,3 V10.5 Q13.5,11.7 12.3,11.7 H1.2 Q0,11.7 0,10.5 Z" fill="#000"/></svg>
<div class="t" style="left:341.00px;top:945.00px;font-size:13px;line-height:13px;font-weight:normal;color:#000;">Directory Mappings</div>
<div class="r" style="left:1585px;top:76px;width:15px;height:914px;background:#fafafa"></div>
<svg class="r" style="left:1587px;top:81px" width="12" height="8" viewBox="0 0 12 8"><polygon points="1,6 5.5,1 10,6" fill="#888"/></svg>
<div class="r" style="left:1588px;top:94px;width:9px;height:651px;background:#888;border-radius:5px"></div>
<svg class="r" style="left:1587px;top:977px" width="12" height="8" viewBox="0 0 12 8"><polygon points="1,1 5.5,6 10,1" fill="#888"/></svg>
<div class="r" style="left:501px;top:86px;width:1074px;height:36px;background:#f5f5f5"></div>
<div class="t" style="left:511.00px;top:96.00px;font-size:15px;line-height:15px;font-weight:normal;color:#157fcc;">Health</div>
<div class="r" style="left:501px;top:122px;width:1074px;height:204px;border:1px solid #d0d0d0;box-sizing:border-box;background:#fff"></div>
<div class="r" style="left:501px;top:336px;width:1074px;height:36px;background:#f5f5f5"></div>
<div class="t" style="left:511.00px;top:346.00px;font-size:15px;line-height:15px;font-weight:normal;color:#157fcc;">Guests</div>
<div class="r" style="left:501px;top:372px;width:1074px;height:204px;border:1px solid #d0d0d0;box-sizing:border-box;background:#fff"></div>
<div class="r" style="left:501px;top:586px;width:1074px;height:36px;background:#f5f5f5"></div>
<div class="t" style="left:511.00px;top:596.00px;font-size:15px;line-height:15px;font-weight:normal;color:#157fcc;">Resources</div>
<div class="r" style="left:501px;top:622px;width:1074px;height:204px;border:1px solid #d0d0d0;box-sizing:border-box;background:#fff"></div>
<div class="t" style="left:387.00px;width:600px;text-align:center;top:148.80px;font-size:15px;line-height:15px;font-weight:bold;color:#000;">Status</div>
<svg class="r" style="left:659px;top:185px" width="56" height="56" viewBox="0 0 56 56"><circle cx="28.7" cy="27.8" r="27.8" fill="#21bf4b"/><polyline points="13.6,26.4 25.3,37.9 43.6,20" fill="none" stroke="#fff" stroke-width="7.6" stroke-linecap="round" stroke-linejoin="miter"/></svg>
<div class="t" style="left:387.00px;width:600px;text-align:center;top:264.00px;font-size:13px;line-height:13px;font-weight:normal;color:#000;">Cluster: eu-alps, Quorate: Yes</div>
<div class="t" style="left:738.00px;width:600px;text-align:center;top:148.80px;font-size:15px;line-height:15px;font-weight:bold;color:#000;">Nodes</div>
<svg class="r" style="left:964px;top:199px" width="15" height="13" viewBox="0 0 15 13"><polyline points="1.9,5.7 6,9.6 13.3,2.2" fill="none" stroke="#21bf4b" stroke-width="3"/></svg>
<div class="t" style="left:984.00px;top:197.76px;font-size:16px;line-height:16px;font-weight:normal;color:#000;">Online</div>
<div class="t" style="left:513.00px;width:600px;text-align:right;top:197.76px;font-size:16px;line-height:16px;font-weight:normal;color:#000;">3</div>
<svg class="r" style="left:966px;top:234.2px" width="12" height="12" viewBox="0 0 12 12"><path d="M1.9,1.9 L9.1,9.1 M9.1,1.9 L1.9,9.1" stroke="#fa6b5b" stroke-width="3"/></svg>
<div class="t" style="left:984.00px;top:231.76px;font-size:16px;line-height:16px;font-weight:normal;color:#000;">Offline</div>
<div class="t" style="left:513.00px;width:600px;text-align:right;top:231.76px;font-size:16px;line-height:16px;font-weight:normal;color:#000;">0</div>
<div class="t" style="left:1089.00px;width:600px;text-align:center;top:148.80px;font-size:15px;line-height:15px;font-weight:bold;color:#000;">Ceph</div>
<svg class="r" style="left:1361px;top:185px" width="56" height="56" viewBox="0 0 56 56"><circle cx="28.7" cy="27.8" r="27.8" fill="#21bf4b"/><polyline points="13.6,26.4 25.3,37.9 43.6,20" fill="none" stroke="#fff" stroke-width="7.6" stroke-linecap="round" stroke-linejoin="miter"/></svg>
<div class="t" style="left:1089.00px;width:600px;text-align:center;top:263.50px;font-size:13px;line-height:13px;font-weight:normal;color:#000;">HEALTH_OK</div>
<div class="t" style="left:489.00px;width:600px;text-align:center;top:392.46px;font-size:16px;line-height:16px;font-weight:bold;color:#000;">Virtual Machines</div>
<svg class="r" style="left:572px;top:430px" width="14" height="14" viewBox="0 0 14 14"><circle cx="7.2" cy="7" r="6" fill="#21bf4b"/><polygon points="5.2,4.3 10.2,7 5.2,9.7" fill="#fff"/></svg>
<div class="t" style="left:590.20px;top:430.15px;font-size:14px;line-height:14px;font-weight:normal;color:#000;">Running</div>
<div class="t" style="left:406.50px;width:600px;text-align:right;top:430.15px;font-size:14px;line-height:14px;font-weight:normal;color:#000;">9</div>
<svg class="r" style="left:572px;top:451px" width="14" height="14" viewBox="0 0 14 14"><circle cx="7.2" cy="6.9" r="6" fill="#cfcfcf"/><rect x="5.2" y="4.9" width="4" height="4" fill="#fff"/></svg>
<div class="t" style="left:590.20px;top:451.15px;font-size:14px;line-height:14px;font-weight:normal;color:#000;">Stopped</div>
<div class="t" style="left:406.50px;width:600px;text-align:right;top:451.15px;font-size:14px;line-height:14px;font-weight:normal;color:#000;">58</div>
<svg class="r" style="left:572px;top:472px" width="14" height="14" viewBox="0 0 14 14"><circle cx="7.2" cy="6.9" r="4.9" fill="none" stroke="#000" stroke-width="2.0"/></svg>
<div class="t" style="left:590.20px;top:472.15px;font-size:14px;line-height:14px;font-weight:normal;color:#000;">Templates</div>
<div class="t" style="left:406.50px;width:600px;text-align:right;top:472.15px;font-size:14px;line-height:14px;font-weight:normal;color:#000;">1</div>
<div class="t" style="left:1005.00px;width:600px;text-align:center;top:403.16px;font-size:16px;line-height:16px;font-weight:bold;color:#000;">LXC Container</div>
<svg class="r" style="left:1107px;top:440px" width="14" height="14" viewBox="0 0 14 14"><circle cx="7.2" cy="7" r="6" fill="#21bf4b"/><polygon points="5.2,4.3 10.2,7 5.2,9.7" fill="#fff"/></svg>
<div class="t" style="left:1124.80px;top:440.15px;font-size:14px;line-height:14px;font-weight:normal;color:#000;">Running</div>
<div class="t" style="left:904.00px;width:600px;text-align:right;top:440.15px;font-size:14px;line-height:14px;font-weight:normal;color:#000;">10</div>
<svg class="r" style="left:1107px;top:461px" width="14" height="14" viewBox="0 0 14 14"><circle cx="7.2" cy="6.9" r="6" fill="#cfcfcf"/><rect x="5.2" y="4.9" width="4" height="4" fill="#fff"/></svg>
<div class="t" style="left:1124.80px;top:461.15px;font-size:14px;line-height:14px;font-weight:normal;color:#000;">Stopped</div>
<div class="t" style="left:904.00px;width:600px;text-align:right;top:461.15px;font-size:14px;line-height:14px;font-weight:normal;color:#000;">4019</div>
<div class="t" style="left:384.00px;width:600px;text-align:center;top:644.30px;font-size:15px;line-height:15px;font-weight:bold;color:#000;">CPU</div>
<svg class="r" style="left:579px;top:675px" width="210" height="110" viewBox="0 0 210 110"><path d="M10.00,110.00 A95,95 0 0 1 200.00,110.00" fill="none" stroke="#f5f5f5" stroke-width="10"/><path d="M10.00,110.00 A95,95 0 0 1 17.81,72.27" fill="none" stroke="#c2ddf2" stroke-width="10"/></svg>
<div class="t" style="left:387.00px;width:600px;text-align:center;top:743.11px;font-size:30px;line-height:30px;font-weight:normal;color:#000;">13%</div>
<div class="t" style="left:384.00px;width:600px;text-align:center;top:797.00px;font-size:13px;line-height:13px;font-weight:normal;color:#000;">of 36 CPU(s)</div>
<div class="t" style="left:738.50px;width:600px;text-align:center;top:644.30px;font-size:15px;line-height:15px;font-weight:bold;color:#000;">Memory</div>
<svg class="r" style="left:933px;top:675px" width="210" height="110" viewBox="0 0 210 110"><path d="M10.00,110.00 A95,95 0 0 1 200.00,110.00" fill="none" stroke="#f5f5f5" stroke-width="10"/><path d="M10.00,110.00 A95,95 0 0 1 142.73,22.81" fill="none" stroke="#c2ddf2" stroke-width="10"/></svg>
<div class="t" style="left:741.30px;width:600px;text-align:center;top:743.11px;font-size:30px;line-height:30px;font-weight:normal;color:#000;">63%</div>
<div class="t" style="left:738.50px;width:600px;text-align:center;top:797.00px;font-size:13px;line-height:13px;font-weight:normal;color:#000;">58.90 GiB of 93.70 GiB</div>
<div class="t" style="left:1092.00px;width:600px;text-align:center;top:644.30px;font-size:15px;line-height:15px;font-weight:bold;color:#000;">Storage</div>
<svg class="r" style="left:1287px;top:675px" width="210" height="110" viewBox="0 0 210 110"><path d="M10.00,110.00 A95,95 0 0 1 200.00,110.00" fill="none" stroke="#f5f5f5" stroke-width="10"/><path d="M10.00,110.00 A95,95 0 0 1 11.68,92.20" fill="none" stroke="#c2ddf2" stroke-width="10"/></svg>
<div class="t" style="left:1095.20px;width:600px;text-align:center;top:743.11px;font-size:30px;line-height:30px;font-weight:normal;color:#000;">6%</div>
<div class="t" style="left:1092.00px;width:600px;text-align:center;top:797.00px;font-size:13px;line-height:13px;font-weight:normal;color:#000;">2.42 TiB of 39.69 TiB</div>
<div class="r" style="left:501px;top:836px;width:1074px;height:36px;background:#f5f5f5"></div>
<div class="t" style="left:511.00px;top:846.00px;font-size:15px;line-height:15px;font-weight:normal;color:#157fcc;">Nodes</div>
<svg class="r" style="left:1526px;top:845px" width="18" height="18" viewBox="0 0 18 18"><circle cx="9" cy="8.9" r="7.5" fill="none" stroke="#3584c9" stroke-width="1.1"/><polyline points="4.3,10.4 8.95,6 13.7,10.6" fill="none" stroke="#3584c9" stroke-width="1.0"/></svg>
<svg class="r" style="left:1548px;top:845px" width="18" height="18" viewBox="0 0 18 18"><circle cx="9" cy="8.9" r="7.5" fill="none" stroke="#3584c9" stroke-width="1.1"/><polyline points="4.2,7.3 9,11.8 13.6,7.3" fill="none" stroke="#3584c9" stroke-width="1.0"/></svg>
<div class="r" style="left:501px;top:872px;width:1074px;height:118px;border-left:1px solid #d0d0d0;border-top:1px solid #d0d0d0;border-right:1px solid #d0d0d0;box-sizing:border-box;background:#fff"></div>
<div class="r" style="left:502px;top:902px;width:1072px;height:1px;background:#d0d0d0"></div>
<div class="r" style="left:938px;top:873px;width:1px;height:29px;background:#d0d0d0"></div>
<div class="r" style="left:978px;top:873px;width:1px;height:29px;background:#d0d0d0"></div>
<div class="r" style="left:1038px;top:873px;width:1px;height:29px;background:#d0d0d0"></div>
<div class="r" style="left:1138px;top:873px;width:1px;height:29px;background:#d0d0d0"></div>
<div class="r" style="left:1253px;top:873px;width:1px;height:29px;background:#d0d0d0"></div>
<div class="r" style="left:1363px;top:873px;width:1px;height:29px;background:#d0d0d0"></div>
<div class="r" style="left:1473px;top:873px;width:1px;height:29px;background:#d0d0d0"></div>
<div class="t" style="left:512.50px;top:881.00px;font-size:13px;line-height:13px;font-weight:normal;color:#666;">Name</div>
<div class="t" style="left:949.00px;top:881.00px;font-size:13px;line-height:13px;font-weight:normal;color:#666;">ID</div>
<div class="t" style="left:989.00px;top:881.00px;font-size:13px;line-height:13px;font-weight:normal;color:#666;">Online</div>
<div class="t" style="left:1049.00px;top:881.00px;font-size:13px;line-height:13px;font-weight:normal;color:#666;">Support</div>
<div class="t" style="left:1149.00px;top:881.00px;font-size:13px;line-height:13px;font-weight:normal;color:#666;">Server Address</div>
<div class="t" style="left:1264.00px;top:881.00px;font-size:13px;line-height:13px;font-weight:normal;color:#666;">CPU usage</div>
<div class="t" style="left:1374.00px;top:881.00px;font-size:13px;line-height:13px;font-weight:normal;color:#666;">Memory usage</div>
<div class="t" style="left:1510.50px;top:881.00px;font-size:13px;line-height:13px;font-weight:normal;color:#666;">Uptime</div>
<div class="r" style="left:502px;top:928px;width:1072px;height:1px;background:#d9d9d9"></div>
<div class="t" style="left:512.50px;top:909.70px;font-size:13px;line-height:13px;font-weight:normal;color:#000;">prod1</div>
<div class="t" style="left:949.00px;top:909.70px;font-size:13px;line-height:13px;font-weight:normal;color:#000;">1</div>
<svg class="r" style="left:989px;top:911px" width="13" height="11" viewBox="0 0 13 11"><polyline points="1.5,5.3 4.5,8.3 11,1.8" fill="none" stroke="#21bf4b" stroke-width="2.8"/></svg>
<div class="t" style="left:1049.00px;top:909.70px;font-size:13px;line-height:13px;font-weight:normal;color:#000;">-</div>
<div class="t" style="left:1149.00px;top:909.70px;font-size:13px;line-height:13px;font-weight:normal;color:#000;">192.168.30.64</div>
<div class="r" style="left:1264px;top:906px;width:90px;height:20px;background:#f5f5f5"></div>
<div class="r" style="left:1264px;top:906px;width:25px;height:20px;background:#c2ddf2"></div>
<div class="t" style="left:1009.00px;width:600px;text-align:center;top:909.20px;font-size:13px;line-height:13px;font-weight:normal;color:#555;">28%</div>
<div class="r" style="left:1374px;top:906px;width:90px;height:20px;background:#f5f5f5"></div>
<div class="r" style="left:1374px;top:906px;width:68px;height:20px;background:#c2ddf2"></div>
<div class="t" style="left:1119.00px;width:600px;text-align:center;top:909.20px;font-size:13px;line-height:13px;font-weight:normal;color:#555;">76%</div>
<div class="t" style="left:1484.00px;top:909.70px;font-size:13px;line-height:13px;font-weight:normal;color:#000;">3 days 23:…</div>
<div class="r" style="left:502px;top:929px;width:1072px;height:24px;background:#fafafa"></div>
<div class="r" style="left:502px;top:953px;width:1072px;height:1px;background:#d9d9d9"></div>
<div class="t" style="left:512.50px;top:934.70px;font-size:13px;line-height:13px;font-weight:normal;color:#000;">prod2</div>
<div class="t" style="left:949.00px;top:934.70px;font-size:13px;line-height:13px;font-weight:normal;color:#000;">2</div>
<svg class="r" style="left:989px;top:936px" width="13" height="11" viewBox="0 0 13 11"><polyline points="1.5,5.3 4.5,8.3 11,1.8" fill="none" stroke="#21bf4b" stroke-width="2.8"/></svg>
<div class="t" style="left:1049.00px;top:934.70px;font-size:13px;line-height:13px;font-weight:normal;color:#000;">-</div>
<div class="t" style="left:1149.00px;top:934.70px;font-size:13px;line-height:13px;font-weight:normal;color:#000;">192.168.30.65</div>
<div class="r" style="left:1264px;top:931px;width:90px;height:20px;background:#f5f5f5"></div>
<div class="r" style="left:1264px;top:931px;width:3px;height:20px;background:#c2ddf2"></div>
<div class="t" style="left:1009.00px;width:600px;text-align:center;top:934.20px;font-size:13px;line-height:13px;font-weight:normal;color:#555;">3%</div>
<div class="r" style="left:1374px;top:931px;width:90px;height:20px;background:#f5f5f5"></div>
<div class="r" style="left:1374px;top:931px;width:55px;height:20px;background:#c2ddf2"></div>
<div class="t" style="left:1119.00px;width:600px;text-align:center;top:934.20px;font-size:13px;line-height:13px;font-weight:normal;color:#555;">61%</div>
<div class="t" style="left:1484.00px;top:934.70px;font-size:13px;line-height:13px;font-weight:normal;color:#000;">3 days 23:…</div>
<div class="r" style="left:502px;top:978px;width:1072px;height:1px;background:#d9d9d9"></div>
<div class="t" style="left:512.50px;top:959.70px;font-size:13px;line-height:13px;font-weight:normal;color:#000;">prod3</div>
<div class="t" style="left:949.00px;top:959.70px;font-size:13px;line-height:13px;font-weight:normal;color:#000;">3</div>
<svg class="r" style="left:989px;top:961px" width="13" height="11" viewBox="0 0 13 11"><polyline points="1.5,5.3 4.5,8.3 11,1.8" fill="none" stroke="#21bf4b" stroke-width="2.8"/></svg>
<div class="t" style="left:1049.00px;top:959.70px;font-size:13px;line-height:13px;font-weight:normal;color:#000;">-</div>
<div class="t" style="left:1149.00px;top:959.70px;font-size:13px;line-height:13px;font-weight:normal;color:#000;">192.168.30.66</div>
<div class="r" style="left:1264px;top:956px;width:90px;height:20px;background:#f5f5f5"></div>
<div class="r" style="left:1264px;top:956px;width:6px;height:20px;background:#c2ddf2"></div>
<div class="t" style="left:1009.00px;width:600px;text-align:center;top:959.20px;font-size:13px;line-height:13px;font-weight:normal;color:#555;">6%</div>
<div class="r" style="left:1374px;top:956px;width:90px;height:20px;background:#f5f5f5"></div>
<div class="r" style="left:1374px;top:956px;width:47px;height:20px;background:#c2ddf2"></div>
<div class="t" style="left:1119.00px;width:600px;text-align:center;top:959.20px;font-size:13px;line-height:13px;font-weight:normal;color:#555;">52%</div>
<div class="t" style="left:1484.00px;top:959.70px;font-size:13px;line-height:13px;font-weight:normal;color:#000;">3 days 23:…</div>
<div class="r" style="left:779px;top:990px;width:48px;height:5px;background:#dcdcdc"></div>
<svg class="r" style="left:798px;top:990px" width="12" height="6" viewBox="0 0 12 6"><polyline points="1.2,1.8 5.5,4.6 9.8,1.8" fill="none" stroke="#8a8a8a" stroke-width="1.3"/></svg>
<div class="r" style="left:5px;top:995px;width:1594px;height:199px;background:#fff"></div>
<div class="r" style="left:5px;top:995px;width:1594px;height:35px;background:#f5f5f5"></div>
<div class="r" style="left:5px;top:1030px;width:1594px;height:1px;background:#d0d0d0"></div>
<div class="r" style="left:16px;top:1001px;width:47px;height:23px;background:#3892d4;border-radius:3px"></div>
<div class="t" style="left:23.00px;top:1006.00px;font-size:13px;line-height:13px;font-weight:normal;color:#fff;">Tasks</div>
<div class="t" style="left:81.00px;top:1006.00px;font-size:13px;line-height:13px;font-weight:normal;color:#000;">Cluster log</div>
<div class="r" style="left:5px;top:1031px;width:1px;height:163px;background:#d0d0d0"></div>
<div class="r" style="left:6px;top:1031px;width:149px;height:29px;background:#edf4fb"></div>
<div class="r" style="left:6px;top:1060px;width:1593px;height:1px;background:#d0d0d0"></div>
<div class="r" style="left:155px;top:1031px;width:1px;height:29px;background:#d0d0d0"></div>
<div class="r" style="left:305px;top:1031px;width:1px;height:29px;background:#d0d0d0"></div>
<div class="r" style="left:405px;top:1031px;width:1px;height:29px;background:#d0d0d0"></div>
<div class="r" style="left:555px;top:1031px;width:1px;height:29px;background:#d0d0d0"></div>
<div class="r" style="left:1353px;top:1031px;width:1px;height:29px;background:#d0d0d0"></div>
<div class="r" style="left:1553px;top:1031px;width:1px;height:29px;background:#d0d0d0"></div>
<div class="r" style="left:1583px;top:1031px;width:1px;height:29px;background:#d0d0d0"></div>
<div class="t" style="left:16.00px;top:1039.00px;font-size:13px;line-height:13px;font-weight:normal;color:#666;">Start Time</div>
<div class="t" style="left:166.00px;top:1039.00px;font-size:13px;line-height:13px;font-weight:normal;color:#666;">End Time</div>
<div class="t" style="left:316.00px;top:1039.00px;font-size:13px;line-height:13px;font-weight:normal;color:#666;">Node</div>
<div class="t" style="left:416.00px;top:1039.00px;font-size:13px;line-height:13px;font-weight:normal;color:#666;">User name</div>
<div class="t" style="left:566.00px;top:1039.00px;font-size:13px;line-height:13px;font-weight:normal;color:#666;">Description</div>
<div class="t" style="left:1364.00px;top:1039.00px;font-size:13px;line-height:13px;font-weight:normal;color:#666;">Status</div>
<svg class="r" style="left:78px;top:1037px" width="11" height="17" viewBox="0 0 11 17"><path d="M5.5,1 V15 M1.2,10.7 L5.5,15.2 L9.8,10.7" fill="none" stroke="#aaa" stroke-width="1.1"/></svg>
<div class="r" style="left:6px;top:1086px;width:1578px;height:1px;background:#d9d9d9"></div>
<div class="t" style="left:16.00px;top:1067.50px;font-size:13px;line-height:13px;font-weight:normal;color:#000;">Nov 18 19:45:03</div>
<div class="t" style="left:166.00px;top:1067.50px;font-size:13px;line-height:13px;font-weight:normal;color:#000;">Nov 18 19:45:07</div>
<div class="t" style="left:316.00px;top:1067.50px;font-size:13px;line-height:13px;font-weight:normal;color:#000;">prod1</div>
<div class="t" style="left:416.00px;top:1067.50px;font-size:13px;line-height:13px;font-weight:normal;color:#000;">root@pam</div>
<div class="t" style="left:566.00px;top:1067.50px;font-size:13px;line-height:13px;font-weight:normal;color:#000;">CT 1009 - Start</div>
<div class="t" style="left:1364.00px;top:1067.50px;font-size:13px;line-height:13px;font-weight:normal;color:#000;">OK</div>
<svg class="r" style="left:1564px;top:1066px" width="11" height="14" viewBox="0 0 11 14"><polyline points="2,1.3 7.4,6.6 2,11.9" fill="none" stroke="#4d4d4d" stroke-width="2.8"/></svg>
<div class="r" style="left:6px;top:1087px;width:1578px;height:24px;background:#fafafa"></div>
<div class="r" style="left:6px;top:1111px;width:1578px;height:1px;background:#d9d9d9"></div>
<div class="t" style="left:16.00px;top:1092.50px;font-size:13px;line-height:13px;font-weight:normal;color:#000;">Nov 18 19:45:03</div>
<div class="t" style="left:166.00px;top:1092.50px;font-size:13px;line-height:13px;font-weight:normal;color:#000;">Nov 18 19:45:06</div>
<div class="t" style="left:316.00px;top:1092.50px;font-size:13px;line-height:13px;font-weight:normal;color:#000;">prod1</div>
<div class="t" style="left:416.00px;top:1092.50px;font-size:13px;line-height:13px;font-weight:normal;color:#000;">root@pam</div>
<div class="t" style="left:566.00px;top:1092.50px;font-size:13px;line-height:13px;font-weight:normal;color:#000;">CT 1007 - Start</div>
<div class="t" style="left:1364.00px;top:1092.50px;font-size:13px;line-height:13px;font-weight:normal;color:#000;">OK</div>
<svg class="r" style="left:1564px;top:1091px" width="11" height="14" viewBox="0 0 11 14"><polyline points="2,1.3 7.4,6.6 2,11.9" fill="none" stroke="#4d4d4d" stroke-width="2.8"/></svg>
<div class="r" style="left:6px;top:1136px;width:1578px;height:1px;background:#d9d9d9"></div>
<div class="t" style="left:16.00px;top:1117.50px;font-size:13px;line-height:13px;font-weight:normal;color:#000;">Nov 18 19:45:03</div>
<div class="t" style="left:166.00px;top:1117.50px;font-size:13px;line-height:13px;font-weight:normal;color:#000;">Nov 18 19:45:06</div>
<div class="t" style="left:316.00px;top:1117.50px;font-size:13px;line-height:13px;font-weight:normal;color:#000;">prod1</div>
<div class="t" style="left:416.00px;top:1117.50px;font-size:13px;line-height:13px;font-weight:normal;color:#000;">root@pam</div>
<div class="t" style="left:566.00px;top:1117.50px;font-size:13px;line-height:13px;font-weight:normal;color:#000;">CT 1006 - Start</div>
<div class="t" style="left:1364.00px;top:1117.50px;font-size:13px;line-height:13px;font-weight:normal;color:#000;">OK</div>
<svg class="r" style="left:1564px;top:1116px" width="11" height="14" viewBox="0 0 11 14"><polyline points="2,1.3 7.4,6.6 2,11.9" fill="none" stroke="#4d4d4d" stroke-width="2.8"/></svg>
<div class="r" style="left:6px;top:1137px;width:1578px;height:24px;background:#fafafa"></div>
<div class="r" style="left:6px;top:1161px;width:1578px;height:1px;background:#d9d9d9"></div>
<div class="t" style="left:16.00px;top:1142.50px;font-size:13px;line-height:13px;font-weight:normal;color:#000;">Nov 18 19:44:53</div>
<div class="t" style="left:166.00px;top:1142.50px;font-size:13px;line-height:13px;font-weight:normal;color:#000;">Nov 18 19:44:57</div>
<div class="t" style="left:316.00px;top:1142.50px;font-size:13px;line-height:13px;font-weight:normal;color:#000;">prod1</div>
<div class="t" style="left:416.00px;top:1142.50px;font-size:13px;line-height:13px;font-weight:normal;color:#000;">root@pam</div>
<div class="t" style="left:566.00px;top:1142.50px;font-size:13px;line-height:13px;font-weight:normal;color:#000;">CT 1001 - Start</div>
<div class="t" style="left:1364.00px;top:1142.50px;font-size:13px;line-height:13px;font-weight:normal;color:#000;">OK</div>
<svg class="r" style="left:1564px;top:1141px" width="11" height="14" viewBox="0 0 11 14"><polyline points="2,1.3 7.4,6.6 2,11.9" fill="none" stroke="#4d4d4d" stroke-width="2.8"/></svg>
<div class="r" style="left:6px;top:1186px;width:1578px;height:1px;background:#d9d9d9"></div>
<div class="t" style="left:16.00px;top:1167.50px;font-size:13px;line-height:13px;font-weight:normal;color:#000;">Nov 18 19:44:53</div>
<div class="t" style="left:166.00px;top:1167.50px;font-size:13px;line-height:13px;font-weight:normal;color:#000;">Nov 18 19:44:57</div>
<div class="t" style="left:316.00px;top:1167.50px;font-size:13px;line-height:13px;font-weight:normal;color:#000;">prod1</div>
<div class="t" style="left:416.00px;top:1167.50px;font-size:13px;line-height:13px;font-weight:normal;color:#000;">root@pam</div>
<div class="t" style="left:566.00px;top:1167.50px;font-size:13px;line-height:13px;font-weight:normal;color:#000;">CT 1002 - Start</div>
<div class="t" style="left:1364.00px;top:1167.50px;font-size:13px;line-height:13px;font-weight:normal;color:#000;">OK</div>
<svg class="r" style="left:1564px;top:1166px" width="11" height="14" viewBox="0 0 11 14"><polyline points="2,1.3 7.4,6.6 2,11.9" fill="none" stroke="#4d4d4d" stroke-width="2.8"/></svg>
<div class="r" style="left:6px;top:1187px;width:1578px;height:7px;background:#fafafa"></div>
<div class="r" style="left:1564px;top:1186px;width:12px;height:8px;overflow:hidden"><svg width="11" height="14" style="position:absolute;left:0;top:5px"><polyline points="2,1.3 7.4,6.6 2,11.9" fill="none" stroke="#4d4d4d" stroke-width="2.8"/></svg></div>
<div class="r" style="left:1584px;top:1062px;width:15px;height:132px;background:#fafafa"></div>
<svg class="r" style="left:1586px;top:1066px" width="12" height="8" viewBox="0 0 12 8"><polygon points="1,6 5.5,1 10,6" fill="#888"/></svg>
<div class="r" style="left:1587px;top:1079px;width:9px;height:17px;background:#888;border-radius:5px"></div>
<svg class="r" style="left:1586px;top:1181px" width="12" height="8" viewBox="0 0 12 8"><polygon points="1,1 5.5,6 10,1" fill="#888"/></svg>
</div></body></html>
